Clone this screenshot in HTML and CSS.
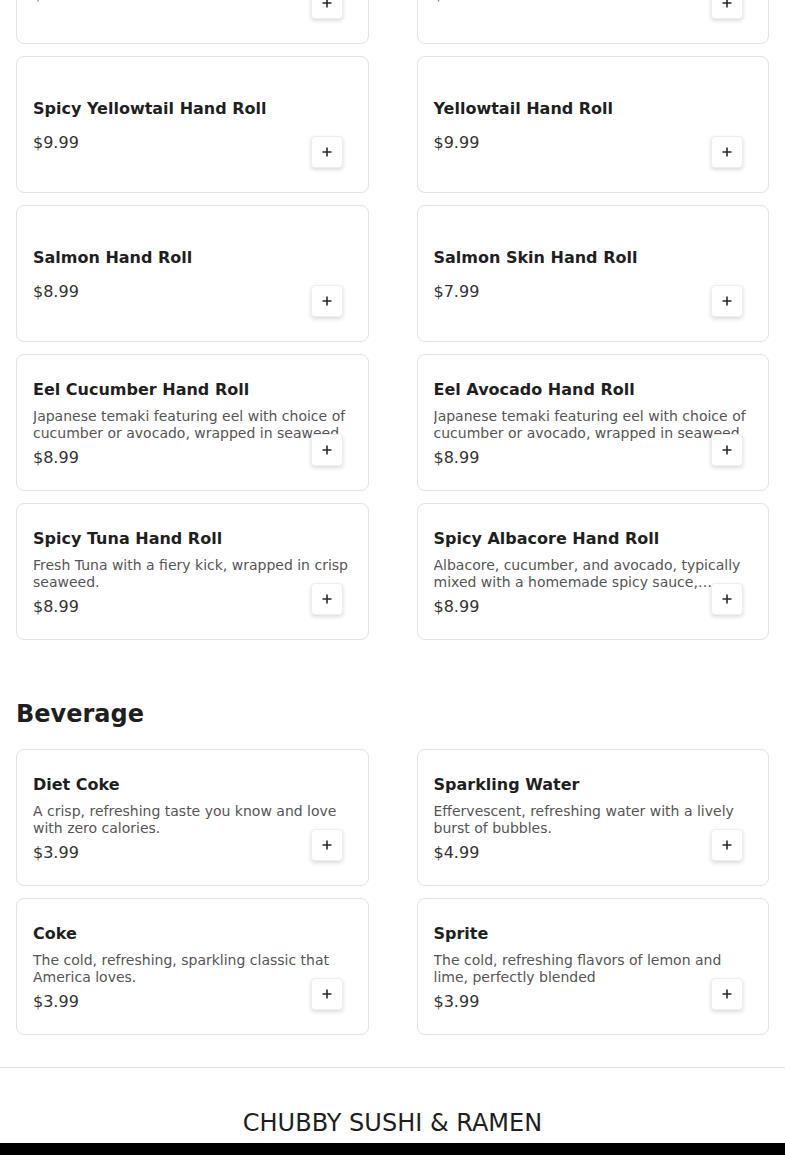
FILE: index.html
```html
<!DOCTYPE html>
<html lang="en">
<head>
<meta charset="utf-8">
<title>Chubby Sushi &amp; Ramen</title>
<link rel="stylesheet" href="styles.css">
</head>
<body>
<main class="menu">
  <section class="section section-first">
    <div class="grid">
      <div class="card">
        <h3 class="item-title">Tuna Hand Roll</h3>
        <p class="item-desc"></p>
        <div class="item-price">$8.99</div>
        <button class="add-btn" aria-label="Add"><svg viewBox="0 0 10 10" width="10" height="10"><path d="M5 0.5V9.5M0.5 5H9.5" stroke="#2a2a2a" stroke-width="1.6" fill="none"/></svg></button>
      </div>
      <div class="card">
        <h3 class="item-title">Scallop Hand Roll</h3>
        <p class="item-desc"></p>
        <div class="item-price">$9.99</div>
        <button class="add-btn" aria-label="Add"><svg viewBox="0 0 10 10" width="10" height="10"><path d="M5 0.5V9.5M0.5 5H9.5" stroke="#2a2a2a" stroke-width="1.6" fill="none"/></svg></button>
      </div>
      <div class="card">
        <h3 class="item-title">Spicy Yellowtail Hand Roll</h3>
        <p class="item-desc"></p>
        <div class="item-price">$9.99</div>
        <button class="add-btn" aria-label="Add"><svg viewBox="0 0 10 10" width="10" height="10"><path d="M5 0.5V9.5M0.5 5H9.5" stroke="#2a2a2a" stroke-width="1.6" fill="none"/></svg></button>
      </div>
      <div class="card">
        <h3 class="item-title">Yellowtail Hand Roll</h3>
        <p class="item-desc"></p>
        <div class="item-price">$9.99</div>
        <button class="add-btn" aria-label="Add"><svg viewBox="0 0 10 10" width="10" height="10"><path d="M5 0.5V9.5M0.5 5H9.5" stroke="#2a2a2a" stroke-width="1.6" fill="none"/></svg></button>
      </div>
      <div class="card">
        <h3 class="item-title">Salmon Hand Roll</h3>
        <p class="item-desc"></p>
        <div class="item-price">$8.99</div>
        <button class="add-btn" aria-label="Add"><svg viewBox="0 0 10 10" width="10" height="10"><path d="M5 0.5V9.5M0.5 5H9.5" stroke="#2a2a2a" stroke-width="1.6" fill="none"/></svg></button>
      </div>
      <div class="card">
        <h3 class="item-title">Salmon Skin Hand Roll</h3>
        <p class="item-desc"></p>
        <div class="item-price">$7.99</div>
        <button class="add-btn" aria-label="Add"><svg viewBox="0 0 10 10" width="10" height="10"><path d="M5 0.5V9.5M0.5 5H9.5" stroke="#2a2a2a" stroke-width="1.6" fill="none"/></svg></button>
      </div>
      <div class="card">
        <h3 class="item-title">Eel Cucumber Hand Roll</h3>
        <p class="item-desc">Japanese temaki featuring eel with choice of cucumber or avocado, wrapped in seaweed.</p>
        <div class="item-price">$8.99</div>
        <button class="add-btn" aria-label="Add"><svg viewBox="0 0 10 10" width="10" height="10"><path d="M5 0.5V9.5M0.5 5H9.5" stroke="#2a2a2a" stroke-width="1.6" fill="none"/></svg></button>
      </div>
      <div class="card">
        <h3 class="item-title">Eel Avocado Hand Roll</h3>
        <p class="item-desc">Japanese temaki featuring eel with choice of cucumber or avocado, wrapped in seaweed.</p>
        <div class="item-price">$8.99</div>
        <button class="add-btn" aria-label="Add"><svg viewBox="0 0 10 10" width="10" height="10"><path d="M5 0.5V9.5M0.5 5H9.5" stroke="#2a2a2a" stroke-width="1.6" fill="none"/></svg></button>
      </div>
      <div class="card">
        <h3 class="item-title">Spicy Tuna Hand Roll</h3>
        <p class="item-desc">Fresh Tuna with a fiery kick, wrapped in crisp seaweed.</p>
        <div class="item-price">$8.99</div>
        <button class="add-btn" aria-label="Add"><svg viewBox="0 0 10 10" width="10" height="10"><path d="M5 0.5V9.5M0.5 5H9.5" stroke="#2a2a2a" stroke-width="1.6" fill="none"/></svg></button>
      </div>
      <div class="card">
        <h3 class="item-title">Spicy Albacore Hand Roll</h3>
        <p class="item-desc">Albacore, cucumber, and avocado, typically mixed with a homemade spicy sauce, wrapped in crisp seaweed.</p>
        <div class="item-price">$8.99</div>
        <button class="add-btn" aria-label="Add"><svg viewBox="0 0 10 10" width="10" height="10"><path d="M5 0.5V9.5M0.5 5H9.5" stroke="#2a2a2a" stroke-width="1.6" fill="none"/></svg></button>
      </div>
    </div>
  </section>

  <section class="section section-next">
    <h2 class="section-title">Beverage</h2>
    <div class="grid">
      <div class="card">
        <h3 class="item-title">Diet Coke</h3>
        <p class="item-desc">A crisp, refreshing taste you know and love with zero calories.</p>
        <div class="item-price">$3.99</div>
        <button class="add-btn" aria-label="Add"><svg viewBox="0 0 10 10" width="10" height="10"><path d="M5 0.5V9.5M0.5 5H9.5" stroke="#2a2a2a" stroke-width="1.6" fill="none"/></svg></button>
      </div>
      <div class="card">
        <h3 class="item-title">Sparkling Water</h3>
        <p class="item-desc">Effervescent, refreshing water with a lively burst of bubbles.</p>
        <div class="item-price">$4.99</div>
        <button class="add-btn" aria-label="Add"><svg viewBox="0 0 10 10" width="10" height="10"><path d="M5 0.5V9.5M0.5 5H9.5" stroke="#2a2a2a" stroke-width="1.6" fill="none"/></svg></button>
      </div>
      <div class="card">
        <h3 class="item-title">Coke</h3>
        <p class="item-desc">The cold, refreshing, sparkling classic that America loves.</p>
        <div class="item-price">$3.99</div>
        <button class="add-btn" aria-label="Add"><svg viewBox="0 0 10 10" width="10" height="10"><path d="M5 0.5V9.5M0.5 5H9.5" stroke="#2a2a2a" stroke-width="1.6" fill="none"/></svg></button>
      </div>
      <div class="card">
        <h3 class="item-title">Sprite</h3>
        <p class="item-desc">The cold, refreshing flavors of lemon and lime, perfectly blended</p>
        <div class="item-price">$3.99</div>
        <button class="add-btn" aria-label="Add"><svg viewBox="0 0 10 10" width="10" height="10"><path d="M5 0.5V9.5M0.5 5H9.5" stroke="#2a2a2a" stroke-width="1.6" fill="none"/></svg></button>
      </div>
    </div>
  </section>
</main>
<footer class="footer">
  <div class="footer-name">CHUBBY SUSHI &amp; RAMEN</div>
  <div class="footer-bar"></div>
</footer>
</body>
</html>
```

FILE: styles.css
```css
* {
  box-sizing: border-box;
}

html, body {
  margin: 0;
  padding: 0;
  background: #ffffff;
  font-family: "DejaVu Sans", Verdana, sans-serif;
  color: #1f1f1f;
}

.menu {
  padding: 0 16px 32px;
}

.section-first {
  margin-top: -93px;
}

.section-next {
  margin-top: 60px;
}

.section-title {
  margin: 0 0 21px;
  font-size: 24px;
  line-height: 28px;
  font-weight: 700;
  color: #1f1f1f;
}

.grid {
  display: grid;
  grid-template-columns: 1fr 1fr;
  column-gap: 48px;
  row-gap: 12px;
}

.card {
  position: relative;
  height: 137px;
  border: 1px solid #e3e3e3;
  border-radius: 8px;
  background: #fff;
  padding: 1px 16px 0;
  display: flex;
  flex-direction: column;
  justify-content: center;
}

.item-title {
  margin: 0 0 9px;
  font-size: 16px;
  line-height: 19px;
  font-weight: 700;
  color: #1f1f1f;
}

.item-desc {
  margin: 0 0 6px;
  font-size: 14px;
  line-height: 17px;
  color: #555555;
  display: -webkit-box;
  -webkit-line-clamp: 2;
  -webkit-box-orient: vertical;
  overflow: hidden;
}

.item-price {
  font-size: 16px;
  line-height: 19px;
  color: #333333;
}

.add-btn {
  position: absolute;
  right: 25px;
  bottom: 24px;
  width: 32px;
  height: 32px;
  padding: 0;
  border: 1px solid #eeeeee;
  border-radius: 4px;
  background: #ffffff;
  box-shadow: 0 2px 4px rgba(0, 0, 0, 0.14);
  display: flex;
  align-items: center;
  justify-content: center;
}

.footer {
  border-top: 1px solid #dddddd;
  padding-top: 41px;
}

.footer-name {
  text-align: center;
  font-size: 24px;
  line-height: 28px;
  color: #1f1f1f;
  margin-bottom: 6px;
}

.footer-bar {
  height: 60px;
  background: #000000;
}
```
